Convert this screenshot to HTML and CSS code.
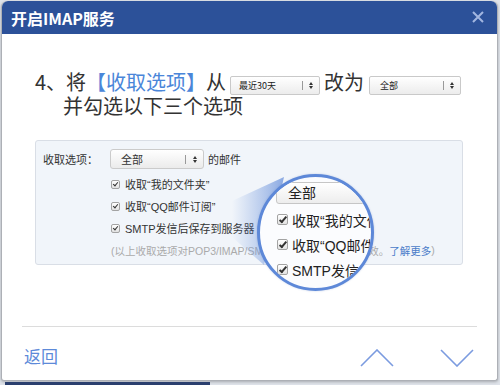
FILE: index.html
```html
<!DOCTYPE html>
<html lang="zh-CN">
<head>
    <meta charset="UTF-8">
    <title>开启IMAP服务</title>
    <link rel="stylesheet" href="styles.css">
</head>
<body>

<div class="dialog">
    <div class="dialog-head">
        <h1 class="dialog-title">开启IMAP服务</h1>
        <span class="close">
            <svg width="12" height="12" viewBox="0 0 12 12"><path d="M1 1L11 11M11 1L1 11" stroke="#a2b6e0" stroke-width="2" fill="none"/></svg>
        </span>
    </div>

    <div class="dialog-body">
        <p class="step">4、将<span class="hl">【收取选项】</span>从<span class="sel sel-range"><span class="sel-text">最近30天</span><span class="sel-btn"><i class="updown"></i></span></span>改为<span class="sel sel-all"><span class="sel-text">全部</span><span class="sel-btn"><i class="updown"></i></span></span><br>并勾选以下三个选项</p>

        <div class="shot">
            <div class="shot-row">
                <span class="shot-label">收取选项：</span>
                <span class="mini-sel"><span class="sel-text">全部</span><span class="sel-btn"><i class="updown"></i></span></span>
                <span class="shot-after">的邮件</span>
            </div>
            <ul class="shot-opts">
                <li><i class="cb"></i>收取“我的文件夹”</li>
                <li><i class="cb"></i>收取“QQ邮件订阅”</li>
                <li><i class="cb"></i>SMTP发信后保存到服务器</li>
                <li class="note">(以上收取选项对POP3/IMAP/SMTP/Exchange服务均生效。<a href="#">了解更多</a>)</li>
            </ul>

            <!-- beam from the small form to the lens -->
            <svg class="beam" width="300" height="140" viewBox="0 0 300 140">
                <defs>
                    <linearGradient id="beamFill" x1="0" y1="0" x2="1" y2="0">
                        <stop offset="0" stop-color="#6f96dc" stop-opacity="0"/>
                        <stop offset="1" stop-color="#5f89d8" stop-opacity="0.7"/>
                    </linearGradient>
                </defs>
                <polygon points="196,60 248,36 228,124 196,96" fill="url(#beamFill)"/>
            </svg>

            <div class="lens">
                <div class="lens-sel">全部</div>
                <ul class="lens-opts">
                    <li><i class="cb cb-big"></i>收取“我的文件夹”</li>
                    <li><i class="cb cb-big"></i>收取“QQ邮件订阅”</li>
                    <li><i class="cb cb-big"></i>SMTP发信后保存到服务器</li>
                </ul>
            </div>
        </div>
    </div>

    <div class="dialog-foot">
        <a class="back" href="#">返回</a>
        <div class="pager">
            <svg width="34" height="18" viewBox="0 0 34 18"><path d="M1 17L17 1L33 17" stroke="#7b9be0" stroke-width="1.6" fill="none"/></svg>
            <svg width="34" height="18" viewBox="0 0 34 18"><path d="M1 1L17 17L33 1" stroke="#7b9be0" stroke-width="1.6" fill="none"/></svg>
        </div>
    </div>
</div>

<div class="taskbar"></div>

</body>
</html>
```

FILE: styles.css
```css
* {
    box-sizing: border-box;
    margin: 0;
    padding: 0;
}

body {
    font-family: "Liberation Sans", "Noto Sans CJK SC", sans-serif;
    background: #dfe3ea;
    color: #333;
    overflow: hidden;
}

.dialog {
    margin: 1px 0 0 1px;
    width: 497px;
    height: 380px;
    background: #fff;
    border: 1px solid #adb0b6;
    border-top: none;
    border-radius: 6px 6px 3px 3px;
    display: flex;
    flex-direction: column;
    box-shadow: 0 1px 3px rgba(0, 0, 0, 0.25);
}

.dialog-head {
    height: 33px;
    background: #2c5199;
    border-radius: 6px 6px 0 0;
    display: flex;
    align-items: center;
    justify-content: space-between;
    padding: 0 13px 0 9px;
}

.dialog-title {
    font-family: "Noto Sans CJK SC", sans-serif;
    font-size: 16px;
    font-weight: bold;
    color: #fff;
    line-height: 20px;
}

.close {
    display: flex;
    margin-top: -1px;
}

.dialog-body {
    flex: 1;
    padding: 37px 0 0 33px;
}

/* the instruction line */
.step {
    font-family: "Noto Sans CJK SC", sans-serif;
    font-size: 20px;
    line-height: 22px;
    color: #333;
    padding-left: 28px;
    text-indent: -28px;
}

.step .hl {
    color: #4a86d9;
}

.sel {
    display: inline-flex;
    align-items: center;
    justify-content: space-between;
    height: 19px;
    vertical-align: 1px;
    text-indent: 0;
    border: 1px solid #c9c9c9;
    border-radius: 2px;
    background: linear-gradient(#fff, #ececec);
    font-size: 9px;
    line-height: 17px;
    color: #222;
    padding-left: 8px;
}

.sel-range {
    width: 90px;
    margin: 0 4px;
}

.sel-all {
    width: 92px;
    margin: 0 0 0 5px;
    padding-left: 10px;
}

.sel-btn {
    display: flex;
    align-items: center;
    height: 9px;
    border-left: 1px solid #999;
    padding: 0 5px 0 6px;
}

.updown {
    display: block;
    width: 5px;
    height: 7px;
    position: relative;
}

.updown::before,
.updown::after {
    content: '';
    position: absolute;
    left: 0;
    border-left: 2.5px solid transparent;
    border-right: 2.5px solid transparent;
}

.updown::before {
    top: 0;
    border-bottom: 3px solid #333;
}

.updown::after {
    bottom: 0;
    border-top: 3px solid #333;
}

/* screenshot of the settings form */
.shot {
    position: relative;
    margin-top: 23px;
    width: 428px;
    height: 125px;
    background: #f1f5fa;
    border: 1px solid #d9dee6;
    border-radius: 3px;
    padding: 8px 0 0 7px;
    font-family: "Liberation Sans", "Noto Sans CJK SC", sans-serif;
    font-size: 11px;
    color: #333;
}

.shot-row {
    display: flex;
    align-items: center;
    height: 20px;
}

.shot-label {
    width: 67px;
}

.mini-sel {
    display: flex;
    align-items: center;
    justify-content: space-between;
    width: 94px;
    height: 20px;
    border: 1px solid #cbcbcb;
    border-radius: 3px;
    background: linear-gradient(#fff, #ebebeb);
    padding-left: 10px;
    font-size: 11px;
}

.mini-sel .sel-btn {
    padding: 0 5px 0 7px;
}

.shot-after {
    margin-left: 4px;
}

.shot-opts {
    list-style: none;
    margin: 4px 0 0 68px;
}

.shot-opts li {
    display: flex;
    align-items: center;
    height: 22px;
    white-space: nowrap;
}

.shot-opts .note {
    color: #aaa;
    font-size: 10.5px;
}

.note a {
    color: #4a7cc9;
    text-decoration: none;
}

.cb {
    display: inline-block;
    position: relative;
    flex-shrink: 0;
    width: 9px;
    height: 9px;
    margin-right: 5px;
    border: 1px solid #a3a3a3;
    border-radius: 2px;
    background: linear-gradient(#fff, #e2e2e2);
}

.cb::after {
    content: '';
    position: absolute;
    left: 2px;
    top: 0;
    width: 2px;
    height: 4px;
    border: solid #333;
    border-width: 0 1.5px 1.5px 0;
    transform: rotate(40deg);
}

.beam {
    position: absolute;
    left: 0;
    top: 0;
}

/* magnifier over the form */
.lens {
    position: absolute;
    left: 221px;
    top: 33px;
    width: 117px;
    height: 117px;
    border: 3px solid #5d88d8;
    border-radius: 50%;
    overflow: hidden;
    background: #fbfcfe;
    padding: 5px 0 0 16px;
    box-shadow: 0 0 2px rgba(60, 100, 180, 0.3);
}

.lens-sel {
    width: 200px;
    height: 22px;
    border: 1px solid #c6c6c6;
    border-radius: 3px;
    background: linear-gradient(#fff, #ededed);
    font-size: 14px;
    line-height: 20px;
    padding-left: 11px;
    color: #222;
}

.lens-opts {
    list-style: none;
    margin-top: 3px;
}

.lens-opts li {
    display: flex;
    align-items: center;
    height: 25px;
    font-size: 14px;
    color: #222;
    white-space: nowrap;
}

.cb-big {
    width: 11px;
    height: 11px;
    margin: 0 4px 0 1px;
}

.cb-big::after {
    left: 3px;
    top: 0;
    height: 6px;
    border-width: 0 2px 2px 0;
}

/* footer */
.dialog-foot {
    height: 54px;
    margin: 0 20px;
    border-top: 1px solid #dcdcdc;
    display: flex;
    align-items: center;
    justify-content: space-between;
    padding: 4px 3px 0 2px;
}

.back {
    font-family: "Noto Sans CJK SC", sans-serif;
    font-size: 17px;
    color: #5d8ad9;
    text-decoration: none;
    line-height: 20px;
}

.pager {
    display: flex;
    gap: 46px;
    margin-top: 5px;
}

.pager svg {
    display: block;
}

.taskbar {
    margin: 1px 0 0 5px;
    width: 205px;
    height: 3px;
    background: #2a3f6e;
}
```
